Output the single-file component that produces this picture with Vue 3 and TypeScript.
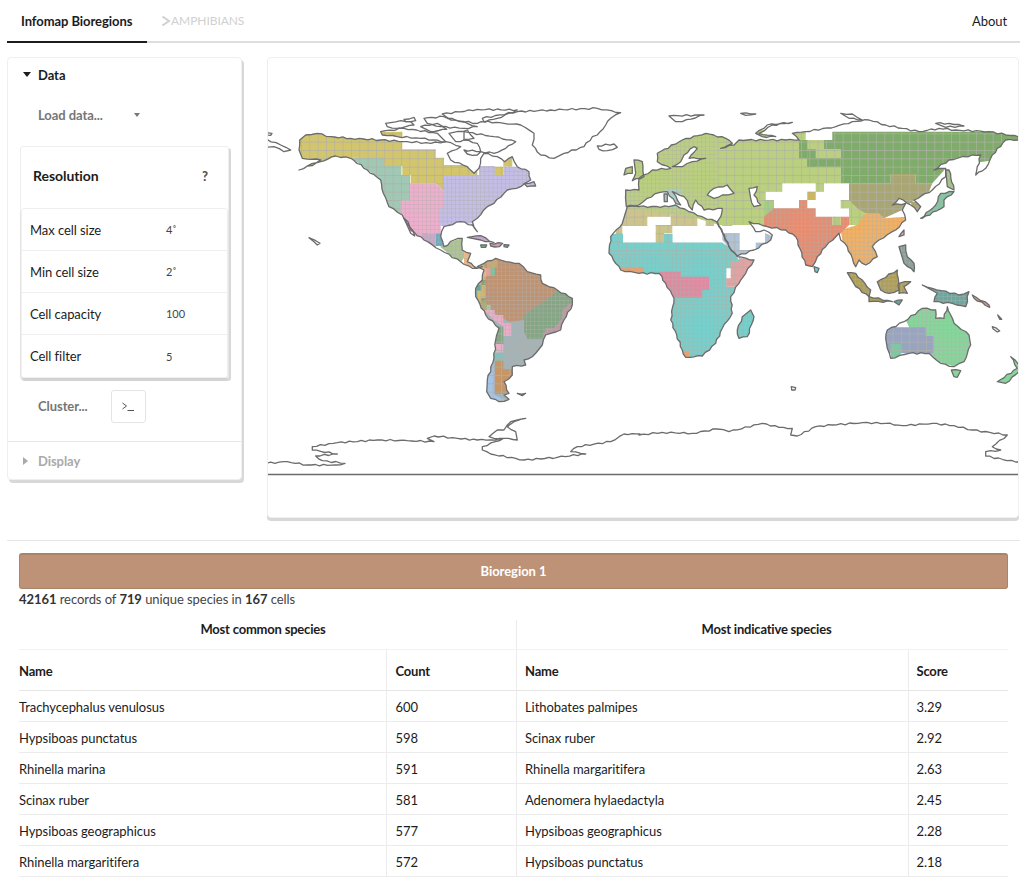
<template>
  <div class="page">
    <nav class="tabs">
      <a class="tab active">Infomap Bioregions</a>
      <a class="tab dataset">
        <svg class="crumb" viewBox="0 0 10 12" width="10" height="12"><path d="M1.5 1.5 L8 6 L1.5 10.5" /></svg>AMPHIBIANS
      </a>
      <a class="about">About</a>
    </nav>

    <div class="top">
      <aside class="side">
        <div class="acc-title"><span class="caret down"></span>Data</div>
        <div class="acc-body">
          <div class="load"><span>Load data...</span><span class="caret small"></span></div>
          <div class="res-card">
            <div class="res-head"><span>Resolution</span><span class="q">?</span></div>
            <div class="res-table">
              <div v-for="row in resolution" :key="row.label" class="res-row">
                <span class="res-label">{{ row.label }}</span>
                <span class="res-value">{{ row.value }}</span>
              </div>
            </div>
          </div>
          <div class="cluster">
            <span>Cluster...</span>
            <button class="term">
              <svg viewBox="0 0 14 10" width="14" height="10"><path d="M1.5 1 L5.5 4 L1.5 7 M6.5 8.5 H13" /></svg>
            </button>
          </div>
        </div>
        <div class="acc-title off"><span class="caret right"></span>Display</div>
      </aside>

      <section class="map">
        <svg viewBox="268 57 752 461" width="752" height="461">
          <defs>
            <pattern id="g8" patternUnits="userSpaceOnUse" width="8.333" height="8.333" patternTransform="translate(2 0)">
              <path d="M0 0 H8.333 M0 0 V8.333" class="gl" />
            </pattern>
            <pattern id="g4" patternUnits="userSpaceOnUse" width="4.167" height="4.167" patternTransform="translate(2 0)">
              <path d="M0 0 H4.167 M0 0 V4.167" class="gl thin" />
            </pattern>
            <clipPath id="landclip">
              <polygon v-for="(s, i) in landShapes" :key="i" :points="s.points" />
            </clipPath>
          </defs>

          <polygon v-for="(s, i) in landShapes" :key="'w' + i" :points="s.points" :fill="s.fill || '#fff'" />
          <g clip-path="url(#landclip)">
            <g v-for="(r, i) in regionShapes" :key="i">
              <polygon :points="r.points" :fill="r.c" />
              <polygon :points="r.points" :fill="`url(#g${r.g})`" />
            </g>
          </g>
          <polygon v-for="(s, i) in landShapes" :key="'g' + i" :points="s.points" :fill="s.g ? `url(#g${s.g})` : 'none'" class="coast" />
          <polygon v-for="(s, i) in seaShapes" :key="'s' + i" :points="s" fill="#fff" class="coast" />
          <polyline :points="antarctica" fill="none" class="coast" />
          <line x1="268" y1="474.5" x2="1019" y2="474.5" class="base" />
        </svg>
      </section>
    </div>

    <section class="bottom">
      <div class="bar">Bioregion 1</div>
      <p class="summary"><b>42161</b> records of <b>719</b> unique species in <b>167</b> cells</p>
      <div class="tables">
        <table v-for="t in tables" :key="t.title">
          <colgroup><col class="c-name" /><col class="c-num" /></colgroup>
          <thead>
            <tr><th colspan="2" class="cap">{{ t.title }}</th></tr>
            <tr class="heads"><th>Name</th><th>{{ t.num }}</th></tr>
          </thead>
          <tbody>
            <tr v-for="row in t.rows" :key="row[0]">
              <td>{{ row[0] }}</td><td>{{ row[1] }}</td>
            </tr>
          </tbody>
        </table>
      </div>
    </section>
  </div>
</template>

<script setup lang="ts">
// map outlines are noted per crop origin, helper converts them to page coords
const origins: Record<string, [number, number]> = {
  a: [265, 90],
  b: [265, 250],
  c: [640, 250],
  d: [640, 90],
}

function toPage(o: string, s: string, rough = true): string {
  const [ox, oy] = origins[o]
  const raw = s.trim().split(/\s+/).map((p) => {
    const [x, y] = p.split(',').map(Number)
    return [ox + x / 3, oy + y / 3]
  })
  if (!rough) return raw.map(([x, y]) => `${x.toFixed(1)},${y.toFixed(1)}`).join(' ')
  // break long edges up and wiggle them a bit so coasts don't look ruled
  const out: string[] = []
  raw.forEach(([x, y], i) => {
    out.push(`${x.toFixed(1)},${y.toFixed(1)}`)
    const next = raw[i + 1]
    if (!next) return
    const dx = next[0] - x
    const dy = next[1] - y
    const len = Math.hypot(dx, dy)
    const n = Math.floor(len / 4)
    for (let k = 1; k < n; k++) {
      const t = k / n
      const w = Math.sin((x + k) * 12.9 + (y - k) * 78.2) * 0.8
      out.push(`${(x + dx * t - (dy / len) * w).toFixed(1)},${(y + dy * t + (dx / len) * w).toFixed(1)}`)
    }
  })
  return out.join(' ')
}

function box(x1: number, y1: number, x2: number, y2: number): string {
  return `${x1},${y1} ${x2},${y1} ${x2},${y2} ${x1},${y2}`
}

const resolution = [
  { label: 'Max cell size', value: '4˚' },
  { label: 'Min cell size', value: '2˚' },
  { label: 'Cell capacity', value: '100' },
  { label: 'Cell filter', value: '5' },
]

const tables = [
  {
    title: 'Most common species',
    num: 'Count',
    rows: [
      ['Trachycephalus venulosus', '600'],
      ['Hypsiboas punctatus', '598'],
      ['Rhinella marina', '591'],
      ['Scinax ruber', '581'],
      ['Hypsiboas geographicus', '577'],
      ['Rhinella margaritifera', '572'],
    ],
  },
  {
    title: 'Most indicative species',
    num: 'Score',
    rows: [
      ['Lithobates palmipes', '3.29'],
      ['Scinax ruber', '2.92'],
      ['Rhinella margaritifera', '2.63'],
      ['Adenomera hylaedactyla', '2.45'],
      ['Hypsiboas geographicus', '2.28'],
      ['Hypsiboas punctatus', '2.18'],
    ],
  },
]

type Land = { o: string; p: string; fill?: string; g?: number }

const southAmerica = '640,50 660,40 695,25 725,35 765,40 790,65 830,75 835,100 880,120 925,145 925,165 900,210 890,240 845,255 835,285 805,320 780,330 785,345 745,350 745,375 720,395 735,430 720,435 735,448 705,455 680,445 668,425 670,390 690,325 695,270 705,235 665,195 635,140 635,115 655,90 660,60'

const land: Land[] = [
  // north america
  { o: 'a', p: '105,180 107,150 125,135 160,130 200,140 260,145 350,150 430,155 500,160 545,155 590,170 550,190 560,210 610,230 630,250 645,235 650,205 660,190 700,200 722,215 745,200 760,230 795,245 800,270 770,290 730,300 690,340 670,350 640,385 625,395 640,425 625,405 590,395 540,410 530,440 540,470 570,450 595,445 595,480 620,490 610,515 640,535 655,530 625,535 590,515 530,480 480,450 440,420 415,375 375,350 358,310 350,270 310,240 260,205 215,198 170,215 105,240 170,210 115,205' },
  { o: 'a', p: '420,385 432,395 452,438 440,430' },
  { o: 'a', p: '365,100 410,92 440,95 450,105 400,115 370,110' },
  { o: 'a', p: '480,85 540,80 610,100 640,110 600,115 530,110 490,100' },
  { o: 'a', p: '350,125 420,115 520,130 545,155 470,145 400,140 355,135' },
  { o: 'a', p: '420,88 450,82 455,92 425,95' },
  { o: 'a', p: '470,110 520,100 548,118 500,125' },
  { o: 'a', p: '555,130 610,120 630,145 575,155' },
  { o: 'a', p: '600,125 690,140 755,155 725,175 690,190 650,185 640,160 600,150' },
  { o: 'a', p: '600,180 650,185 640,195 610,192' },
  { o: 'a', p: '535,72 640,58 760,60 700,85 640,100 560,90' },
  { o: 'a', p: '655,85 760,65 860,60 1000,55 1070,68 1040,85 1025,105 1000,135 985,140 960,170 900,190 870,205 830,195 805,165 810,130 770,105 720,100 660,95' },
  { o: 'a', p: '1000,168 1050,162 1060,172 1030,182 1005,178' },
  { o: 'a', p: '8,148 50,165 80,180 60,185 30,170 8,172' },
  { o: 'a', p: '8,128 24,130 20,136 8,135' },
  { o: 'a', p: '135,443 145,447 155,452 168,460 160,465 150,455' },
  { o: 'a', p: '780,280 810,275 815,288 790,290' },
  { o: 'a', p: '610,442 650,437 690,458 650,450', fill: '#c4a8cc' },
  { o: 'a', p: '678,460 716,460 706,470 680,468', fill: '#cf9cb8' },
  { o: 'a', p: '650,465 668,465 665,472 652,472', fill: '#70c090' },
  { o: 'a', p: '720,464 735,465 730,472 720,470', fill: '#6faab8' },
  // south america
  { o: 'b', p: southAmerica },
  { o: 'b', p: '760,430 785,430 775,437' },
  // africa
  { o: 'd', p: '-35,350 0,350 90,350 110,345 150,365 190,380 232,395 245,415 270,470 295,500 345,510 320,550 300,580 275,620 280,670 250,715 230,760 190,798 140,802 130,780 95,690 105,625 80,580 60,550 0,550 -55,540 -90,490 -85,440 -50,400' },
  { o: 'c', p: '335,180 345,200 325,260 300,265 295,240 310,200', fill: '#c19a5e', g: 4 },
  // eurasia
  { o: 'd', p: '-40,310 -38,350 0,345 25,325 60,308 85,305 110,340 125,345 100,305 135,320 160,360 170,330 195,360 250,355 245,380 235,395 270,470 295,498 345,480 395,450 400,435 375,420 350,425 330,395 385,410 440,420 470,440 500,525 520,530 535,500 560,470 600,430 605,450 625,470 650,530 660,510 680,525 715,500 700,470 720,450 770,420 800,390 790,360 800,340 760,345 780,325 815,345 835,365 845,350 825,330 880,300 920,260 920,235 885,240 930,210 1000,195 1025,195 1010,255 1040,235 1060,195 1100,150 1138,150 1138,140 1050,125 950,120 900,115 840,125 740,105 690,90 640,95 590,110 500,125 460,130 480,150 440,150 300,150 285,165 245,175 280,160 260,145 200,130 130,150 55,190 55,215 95,235 40,240 0,265 0,300 -40,300' },
  { o: 'd', p: '-15,210 10,215 15,260 -20,272 -10,250', fill: '#b9cf7c' },
  { o: 'd', p: '-40,235 -20,230 -20,250 -45,255', fill: '#b9cf7c' },
  { o: 'd', p: '75,312 85,312 85,335 76,335', fill: '#77b9c8' },
  { o: 'd', p: '350,130 385,105 460,97 400,105 360,130 410,140 370,140' },
  { o: 'd', p: '90,78 195,75 130,95 110,95' },
  { o: 'd', p: '305,70 350,72 320,76' },
  { o: 'd', p: '605,70 640,72 670,90 630,85' },
  { o: 'd', p: '890,100 930,100 975,108 920,112' },
  { o: 'd', p: '920,240 930,240 945,300 925,290', fill: '#a4c48c' },
  { o: 'd', p: '845,385 890,345 905,310 945,305 915,330 915,350 850,385', fill: '#80c8a2', g: 4 },
  { o: 'd', p: '780,440 795,420 795,435', fill: '#d0a8b8' },
  { o: 'd', p: '525,530 540,535 535,548 528,545', fill: '#7cc8d0' },
  { o: 'd', p: '780,470 800,465 805,500 825,520 825,545 795,520', fill: '#8aa09c', g: 4 },
  { o: 'd', p: '625,548 650,550 695,600 690,620 650,590', fill: '#ad9e5a', g: 4 },
  { o: 'd', p: '690,620 760,635 690,635', fill: '#ad9e5a' },
  { o: 'd', p: '715,575 775,540 780,600 750,610 725,600', fill: '#ad9e5a', g: 4 },
  { o: 'd', p: '780,580 815,575 795,590 805,610 780,610', fill: '#ad9e5a', g: 4 },
  { o: 'd', p: '765,635 790,630 780,645', fill: '#6aa7a0' },
  // oceania
  { o: 'c', p: '850,105 880,115 960,135 990,125 980,170 940,160 885,155 895,130', fill: '#6aa7a0', g: 4 },
  { o: 'c', p: '1000,135 1050,165 1052,172 1005,145', fill: '#e09c8c' },
  { o: 'c', p: '1075,395 1135,355 1115,320 1140,345 1140,365 1100,400', fill: '#86d69b' },
  { o: 'c', p: '740,265 745,240 795,215 850,175 890,180 890,205 915,205 925,170 945,220 990,255 995,285 975,335 945,350 905,340 870,310 810,310 755,325 745,295' },
  { o: 'c', p: '937,360 965,362 955,382 945,380', fill: '#86d69b' },
  { o: 'c', p: '457,410 470,413 468,420 458,420' },
  { o: 'c', p: '1060,230 1082,243 1075,246 1062,236' },
  { o: 'c', p: '1076,195 1088,208 1082,208' },
]

type Region = { o: string; p: string; c: string; g: number }

const regions: Region[] = [
  // north america
  { o: 'a', p: '90,125 415,125 415,178 515,178 515,203 540,203 540,225 640,225 640,255 540,255 540,305 515,280 440,280 440,255 415,255 415,228 360,228 360,205 260,203 200,205 180,250 90,250', c: '#d3c56b', g: 8 },
  { o: 'a', p: box(690, 230, 718, 255), c: '#d3c56b', g: 8 },
  { o: 'a', p: box(718, 195, 745, 230), c: '#d3c56b', g: 8 },
  { o: 'a', p: '260,203 360,203 360,228 412,228 412,255 438,255 438,305 462,305 462,332 412,332 412,380 360,380 340,260', c: '#a0c8b4', g: 8 },
  { o: 'a', p: '438,280 515,280 540,305 540,405 530,405 530,430 490,430 490,455 480,455 410,400 410,332 438,332', c: '#f0aecf', g: 4 },
  { o: 'a', p: '540,255 645,255 645,228 692,228 692,255 718,255 718,230 800,230 820,300 640,430 625,400 540,410 527,405 527,355 540,350', c: '#c4bde6', g: 4 },
  { o: 'a', p: '475,430 515,430 515,480 530,480 475,470', c: '#c9a8cc', g: 4 },
  { o: 'a', p: box(515, 430, 540, 468), c: '#6cabbf', g: 4 },
  { o: 'a', p: '528,470 600,440 610,485 590,520', c: '#adc495', g: 4 },
  { o: 'a', p: '600,480 625,480 625,520 660,540 600,525', c: '#edb888', g: 8 },
  // south america, base first so nothing stays white
  { o: 'b', p: southAmerica, c: '#a3b3b8', g: 8 },
  { o: 'b', p: '630,30 668,30 668,190 630,190', c: '#d3b46a', g: 4 },
  { o: 'b', p: '650,20 770,20 840,70 880,120 855,145 815,170 780,195 780,210 735,215 690,190 665,180 665,60', c: '#bf9272', g: 4 },
  { o: 'b', p: box(655, 55, 668, 80), c: '#edb888', g: 4 },
  { o: 'b', p: box(668, 53, 680, 78), c: '#ee9ca0', g: 4 },
  { o: 'b', p: box(680, 52, 692, 78), c: '#70c8a0', g: 4 },
  { o: 'b', p: box(668, 30, 700, 52), c: '#c8a870', g: 4 },
  { o: 'b', p: box(632, 105, 652, 122), c: '#50a8a8', g: 4 },
  { o: 'b', p: box(640, 122, 652, 145), c: '#d8c060', g: 4 },
  { o: 'b', p: box(628, 122, 640, 150), c: '#50b8b8', g: 4 },
  { o: 'b', p: box(652, 90, 665, 105), c: '#84a070', g: 4 },
  { o: 'b', p: box(652, 145, 665, 155), c: '#84a070', g: 4 },
  { o: 'b', p: box(650, 155, 668, 180), c: '#b4a868', g: 4 },
  { o: 'b', p: box(668, 165, 680, 180), c: '#9ad0a0', g: 4 },
  { o: 'b', p: '880,120 930,130 925,160 895,185 895,205 870,235 845,235 835,268 790,268 780,245 780,195 815,170 855,145', c: '#84a684', g: 4 },
  { o: 'b', p: '895,180 930,150 890,245 845,265 835,268 845,235 870,235 895,205', c: '#b89aa0', g: 4 },
  { o: 'b', p: '742,218 780,210 780,245 790,268 835,268 845,300 790,330 790,350 720,360 718,255 742,255', c: '#a3b3b8', g: 4 },
  { o: 'b', p: '660,180 692,180 692,195 718,195 718,220 742,220 742,258 718,258 718,230 690,210', c: '#e8b0c8', g: 4 },
  { o: 'b', p: box(690, 282, 718, 308), c: '#e8b0c8', g: 8 },
  { o: 'b', p: '700,230 718,230 718,282 695,282', c: '#84a684', g: 8 },
  { o: 'b', p: box(685, 308, 718, 332), c: '#84c0b8', g: 8 },
  { o: 'b', p: '660,335 692,335 692,435 745,460 680,460 660,430', c: '#a4c4e8', g: 8 },
  { o: 'b', p: '692,332 718,332 718,358 745,358 745,380 720,395 735,432 692,432', c: '#c49668', g: 8 },
  // africa
  { o: 'd', p: '-70,345 95,345 95,380 25,380 25,407 -50,407 -50,432 -70,432', c: '#cdc48c', g: 8 },
  { o: 'd', p: '95,345 250,345 250,380 280,380 280,407 250,407 250,380 225,380 225,407 200,407 200,380 175,380 175,407 95,407', c: '#cdc48c', g: 8 },
  { o: 'd', p: '50,405 100,405 100,430 75,430 75,458 50,458', c: '#cdc48c', g: 8 },
  { o: 'd', p: '-100,432 -48,432 -48,458 75,458 75,432 100,432 100,458 250,458 270,470 300,510 300,535 262,535 262,590 345,590 345,850 60,850 60,550 -100,550', c: '#76cfcb', g: 4 },
  { o: 'd', p: '-100,432 -48,432 -48,458 75,458 75,432 100,432 100,458 250,458 262,482 -100,482', c: '#76cfcb', g: 8 },
  { o: 'd', p: box(-60, 532, 15, 555), c: '#e8a070', g: 8 },
  { o: 'd', p: box(132, 785, 150, 810), c: '#e8a070', g: 8 },
  { o: 'c', p: '60,65 125,65 125,80 210,80 210,120 190,120 190,143 100,143 75,100', c: '#de8aa0', g: 4 },
  { o: 'd', p: '275,515 300,515 300,505 355,505 340,570 290,590 262,590 262,565 275,565', c: '#dfa3a3', g: 8 },
  { o: 'd', p: '250,430 302,430 302,480 350,480 350,458 378,458 378,430 405,440 380,470 300,505 250,450', c: '#aec3d8', g: 8 },
  // eurasia
  { o: 'd', p: '-60,190 240,120 240,405 160,380 -60,350', c: '#bad07e', g: 4 },
  { o: 'd', p: '235,120 500,120 500,150 555,150 555,178 605,178 605,280 555,280 555,305 530,305 530,280 430,280 430,305 380,305 380,330 405,330 405,355 375,355 375,405 330,405 235,405', c: '#bad07e', g: 8 },
  { o: 'd', p: box(80, 300, 125, 350), c: '#a8d0cc', g: 8 },
  { o: 'd', p: '605,280 755,280 755,252 830,252 830,280 880,280 925,230 1140,200 1140,125 580,125 580,150 555,150 555,178 605,178', c: '#80ac6b', g: 8 },
  { o: 'd', p: box(480, 150, 505, 205), c: '#80ac6b', g: 8 },
  { o: 'd', p: box(505, 178, 530, 230), c: '#80ac6b', g: 8 },
  { o: 'd', p: box(505, 205, 605, 230), c: '#80ac6b', g: 8 },
  { o: 'd', p: box(605, 330, 655, 355), c: '#bad07e', g: 8 },
  { o: 'd', p: box(630, 355, 680, 405), c: '#bad07e', g: 8 },
  { o: 'd', p: box(375, 330, 405, 380), c: '#a4cf80', g: 8 },
  { o: 'd', p: box(505, 305, 530, 330), c: '#cdb75a', g: 8 },
  { o: 'd', p: '630,280 755,280 755,252 830,252 830,280 880,280 870,305 820,335 790,360 735,385 680,370 655,355 630,330', c: '#a9a674', g: 8 },
  { o: 'd', p: '815,335 850,335 850,375 825,375', c: '#a9a674', g: 8 },
  { o: 'd', p: '605,420 655,405 680,370 720,370 735,385 805,380 790,420 720,470 720,530 650,540 610,450', c: '#f0b066', g: 4 },
  { o: 'd', p: '375,380 405,355 480,355 480,330 505,330 505,355 530,355 530,380 580,380 580,405 605,405 605,380 630,380 630,405 605,430 540,520 500,540 470,440 375,420', c: '#e68c70', g: 4 },
  { o: 'd', p: box(580, 380, 605, 405), c: '#b8c87a', g: 8 },
  // australia
  { o: 'c', p: '780,170 960,170 1010,260 980,360 880,330 810,320 810,230', c: '#86d69b', g: 4 },
  { o: 'c', p: box(735, 232, 860, 258), c: '#99a5c0', g: 8 },
  { o: 'c', p: box(735, 258, 883, 310), c: '#99a5c0', g: 8 },
  { o: 'c', p: box(755, 282, 785, 330), c: '#7cc8a0', g: 8 },
]

const landShapes = land.map((s) => ({ points: toPage(s.o, s.p), fill: s.fill, g: s.g }))
const regionShapes = regions.map((r) => ({ points: toPage(r.o, r.p, false), c: r.c, g: r.g }))

// inner seas go over the land
const seaShapes = [
  toPage('d', '100,230 125,215 135,195 165,170 175,175 150,205 200,205 160,215 130,230'),
  toPage('d', '205,315 225,295 265,285 285,310 250,315 225,325'),
  toPage('d', '330,295 355,290 345,315 365,345 345,350 335,325'),
]

const antarctica = [
  toPage('b', '8,673 8,640 70,635 130,645 215,645 243,640 175,632 155,618 220,612 145,600 145,590 220,578 340,570 430,572 510,575 490,565 510,558 580,565 640,570 680,570 720,565 760,570 755,545 730,530 750,515 785,505 740,515 720,540 700,540 675,560 690,565 720,565 655,590 655,600 680,612 780,630 880,622 965,612 920,605 940,590 1040,575 1080,552 1128,552'),
  toPage('c', '0,555 70,547 160,550 235,537 270,545 370,520 420,532 460,535 455,555 475,558 530,530 580,525 670,518 740,520 790,527 880,520 945,527 1000,540 1105,555 1060,590 1085,600 1040,605 1040,618 1130,636 1140,636'),
].join(' ')
</script>

<style scoped>
.page {
  width: 1036px;
  height: 882px;
  overflow: hidden;
  box-sizing: border-box;
  padding: 0 16px 0 7px;
  font-family: Lato, "Open Sans", sans-serif;
  font-size: 13px;
  letter-spacing: -0.06px;
  color: #1b1c1d;
}

.tabs {
  display: flex;
  align-items: center;
  height: 41px;
  border-bottom: 2px solid #dededf;
}
.tab {
  display: flex;
  align-items: center;
  height: 41px;
  box-sizing: border-box;
}
.active {
  width: 140px;
  padding-left: 14px;
  font-weight: 700;
  border-bottom: 2px solid #1b1c1d;
  margin-bottom: -2px;
  height: 43px;
}
.dataset {
  margin-left: 14px;
  color: #d0d0d0;
  font-size: 12px;
}
.crumb {
  fill: none;
  stroke: #d0d0d0;
  stroke-width: 2;
}
.about {
  margin-left: auto;
  margin-right: 13px;
}

.top {
  display: flex;
  align-items: flex-start;
  gap: 25px;
  margin-top: 14px;
}
.side,
.map {
  border: 1px solid #efefef;
  border-radius: 4px;
  box-shadow: 2px 3px 0 #d8d8d8;
  background: #fff;
}
.side {
  width: 235px;
  height: 423px;
  box-sizing: border-box;
  display: flex;
  flex-direction: column;
}
.acc-title {
  display: flex;
  align-items: center;
  height: 34px;
  padding-left: 15px;
  font-weight: 700;
}
.acc-title.off {
  color: #aaa;
  height: 37px;
  border-top: 1px solid #e6e6e6;
}
.caret {
  display: inline-block;
  width: 0;
  height: 0;
  margin-right: 10px;
}
.caret.down {
  border-left: 4px solid transparent;
  border-right: 4px solid transparent;
  border-top: 5px solid #1b1c1d;
  margin-bottom: 2px;
  margin-right: 7px;
}
.caret.right {
  border-top: 4px solid transparent;
  border-bottom: 4px solid transparent;
  border-left: 5px solid #aaa;
  margin-right: 10px;
}
.caret.small {
  border-left: 3.5px solid transparent;
  border-right: 3.5px solid transparent;
  border-top: 4px solid #777;
  margin: 0;
}
.acc-body {
  flex: 1;
  padding: 0 12px;
}
.load {
  display: flex;
  align-items: center;
  justify-content: space-between;
  width: 102px;
  height: 46px;
  padding-left: 18px;
  font-weight: 700;
  color: #767676;
}
.res-card {
  margin-top: 8px;
  width: 209px;
  height: 233px;
  box-sizing: border-box;
  border: 1px solid #efefef;
  border-radius: 3px;
  box-shadow: 2px 2px 0 #d8d8d8;
  display: flex;
  flex-direction: column;
}
.res-head {
  height: 61px;
  box-sizing: border-box;
  display: flex;
  align-items: center;
  justify-content: space-between;
  padding: 0 20px 4px 12px;
  font-size: 14px;
  font-weight: 700;
}
.q {
  color: #555;
  font-weight: 900;
  font-size: 13px;
}
.res-table {
  flex: 1;
  border: 1px solid #efefef;
  border-radius: 3px;
  box-shadow: 0 2px 2px #cfcfcf;
}
.res-row {
  display: flex;
  align-items: center;
  height: 42px;
  box-sizing: border-box;
  padding-left: 8px;
  border-bottom: 1px solid #efefef;
}
.res-row:last-child {
  border-bottom: 0;
}
.res-label {
  width: 136px;
}
.res-value {
  font-size: 11px;
  color: #444;
}
.cluster {
  display: flex;
  align-items: center;
  gap: 23px;
  height: 33px;
  margin-top: 11px;
  padding-left: 18px;
  font-weight: 700;
  color: #767676;
}
.cluster span {
  margin-top: -2px;
}
.term {
  width: 35px;
  height: 33px;
  padding: 0;
  display: flex;
  align-items: center;
  justify-content: center;
  background: #fff;
  border: 1px solid #e4e4e4;
  border-radius: 3px;
}
.term svg {
  fill: none;
  stroke: #555;
  stroke-width: 1;
}

.map {
  width: 752px;
  height: 461px;
  box-sizing: border-box;
  overflow: hidden;
  box-shadow: 0 3px 0 #d8d8d8;
}
.map svg {
  display: block;
  margin: -1px;
}
.coast {
  stroke: #6b6b6b;
  stroke-width: 1.3;
  stroke-linejoin: round;
}
.base {
  stroke: #6b6b6b;
  stroke-width: 1.3;
}
.gl {
  fill: none;
  stroke: #b0b0a8;
  stroke-width: 1.3;
}
.gl.thin {
  stroke-width: 0.8;
}

.bottom {
  margin-top: 22px;
  border-top: 1px solid #e6e6e6;
  padding: 12px 12px 0;
}
.bar {
  height: 36px;
  box-sizing: border-box;
  display: flex;
  align-items: center;
  justify-content: center;
  padding-bottom: 2px;
  background: #bd9276;
  border: 1px solid #a98469;
  border-top-width: 2px;
  border-radius: 3px;
  color: #fff;
  font-weight: 700;
}
.summary {
  margin: 2px 0 0;
  height: 29px;
  color: #444;
}
.summary b {
  color: #333;
}
.tables {
  display: flex;
}
table {
  width: 497px;
  table-layout: fixed;
  border-collapse: collapse;
  flex: none;
}
table + table {
  width: 492px;
  border-left: 1px solid #ececec;
}
.c-num {
  width: 129px;
}
table + table .c-num {
  width: 100px;
}
th,
td {
  text-align: left;
  font-weight: 400;
  padding: 0;
}
th {
  font-weight: 700;
  letter-spacing: -0.2px;
}
.cap {
  height: 29px;
  text-align: center;
  border-bottom: 1px solid #f2f2f2;
  padding-bottom: 10px;
  padding-right: 9px;
  box-sizing: border-box;
}
.heads th {
  height: 41px;
  box-sizing: border-box;
  padding-top: 2px;
  border-bottom: 1px solid #e6e6e6;
}
.heads th + th {
  border-left: 1px solid #ececec;
  padding-left: 8px;
}
td {
  height: 31px;
  padding-top: 2px;
  border-bottom: 1px solid #ececec;
  box-sizing: border-box;
}
td + td {
  padding-left: 8px;
  border-left: 1px solid #ececec;
}
table + table th:first-child,
table + table td:first-child {
  padding-left: 8px;
}
table + table .cap {
  padding-left: 0;
  padding-right: 0;
}
</style>

<style>
html,
body {
  margin: 0;
  background: #fff;
}
</style>
